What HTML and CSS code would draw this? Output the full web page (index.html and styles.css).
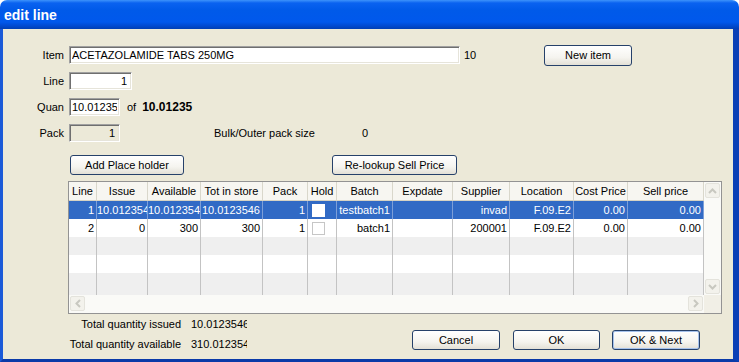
FILE: index.html
```html
<!DOCTYPE html>
<html>
<head>
    <link rel="stylesheet" href="styles.css">
</head>
<body>
    <div class="window">
        <div class="titlebar">edit line</div>
        <div class="client">
            <div class="row">
                <label class="lbl" for="item">Item</label>
                <input type="text" class="field item-field" id="item" value="ACETAZOLAMIDE TABS 250MG">
                <span class="item-count">10</span>
                <button type="button" class="btn btn-new">New item</button>
            </div>
            <div class="row">
                <label class="lbl" for="line">Line</label>
                <input type="text" class="field line-field" id="line" value="1">
            </div>
            <div class="row">
                <label class="lbl" for="quan">Quan</label>
                <input type="text" class="field small-field" id="quan" value="10.0123546">
                <span class="of">of</span>
                <span class="qty">10.01235</span>
            </div>
            <div class="row">
                <label class="lbl" for="pack">Pack</label>
                <input type="text" class="field small-field readonly" id="pack" value="1" readonly>
                <span class="bulk">Bulk/Outer pack size</span>
                <span>0</span>
            </div>

            <div class="btn-row">
                <button type="button" class="btn btn-place">Add Place holder</button>
                <button type="button" class="btn btn-relookup">Re-lookup Sell Price</button>
            </div>

            <div class="grid">
                <div class="grid-body">
                    <div class="grid-row grid-head">
                        <div class="cell">Line</div>
                        <div class="cell">Issue</div>
                        <div class="cell">Available</div>
                        <div class="cell">Tot in store</div>
                        <div class="cell">Pack</div>
                        <div class="cell">Hold</div>
                        <div class="cell">Batch</div>
                        <div class="cell">Expdate</div>
                        <div class="cell">Supplier</div>
                        <div class="cell">Location</div>
                        <div class="cell">Cost Price</div>
                        <div class="cell">Sell price</div>
                    </div>
                    <div class="grid-row selected">
                        <div class="cell">1</div>
                        <div class="cell">10.0123546</div>
                        <div class="cell">10.0123546</div>
                        <div class="cell">10.0123546</div>
                        <div class="cell">1</div>
                        <div class="cell hold"><span class="check"></span></div>
                        <div class="cell">testbatch1</div>
                        <div class="cell"></div>
                        <div class="cell">invad</div>
                        <div class="cell">F.09.E2</div>
                        <div class="cell">0.00</div>
                        <div class="cell">0.00</div>
                    </div>
                    <div class="grid-row">
                        <div class="cell">2</div>
                        <div class="cell">0</div>
                        <div class="cell">300</div>
                        <div class="cell">300</div>
                        <div class="cell">1</div>
                        <div class="cell hold"><span class="check"></span></div>
                        <div class="cell">batch1</div>
                        <div class="cell"></div>
                        <div class="cell">200001</div>
                        <div class="cell">F.09.E2</div>
                        <div class="cell">0.00</div>
                        <div class="cell">0.00</div>
                    </div>
                    <div class="grid-row alt">
                        <div class="cell"></div><div class="cell"></div><div class="cell"></div><div class="cell"></div>
                        <div class="cell"></div><div class="cell"></div><div class="cell"></div><div class="cell"></div>
                        <div class="cell"></div><div class="cell"></div><div class="cell"></div><div class="cell"></div>
                    </div>
                    <div class="grid-row">
                        <div class="cell"></div><div class="cell"></div><div class="cell"></div><div class="cell"></div>
                        <div class="cell"></div><div class="cell"></div><div class="cell"></div><div class="cell"></div>
                        <div class="cell"></div><div class="cell"></div><div class="cell"></div><div class="cell"></div>
                    </div>
                    <div class="grid-row alt tall">
                        <div class="cell"></div><div class="cell"></div><div class="cell"></div><div class="cell"></div>
                        <div class="cell"></div><div class="cell"></div><div class="cell"></div><div class="cell"></div>
                        <div class="cell"></div><div class="cell"></div><div class="cell"></div><div class="cell"></div>
                    </div>
                </div>
                <div class="vscroll">
                    <div class="sb-btn">
                        <svg width="9" height="6" viewBox="0 0 9 6"><polyline points="1,5 4.5,1.5 8,5" fill="none" stroke="#c8c8c0" stroke-width="2"/></svg>
                    </div>
                    <div class="sb-track"></div>
                    <div class="sb-btn">
                        <svg width="9" height="6" viewBox="0 0 9 6"><polyline points="1,1 4.5,4.5 8,1" fill="none" stroke="#c8c8c0" stroke-width="2"/></svg>
                    </div>
                </div>
                <div class="hscroll">
                    <div class="sb-btn">
                        <svg width="6" height="9" viewBox="0 0 6 9"><polyline points="5,1 1.5,4.5 5,8" fill="none" stroke="#c8c8c0" stroke-width="2"/></svg>
                    </div>
                    <div class="sb-track"></div>
                    <div class="sb-btn">
                        <svg width="6" height="9" viewBox="0 0 6 9"><polyline points="1,1 4.5,4.5 1,8" fill="none" stroke="#c8c8c0" stroke-width="2"/></svg>
                    </div>
                </div>
                <div class="corner"></div>
            </div>

            <div class="footer">
                <div class="totals">
                    <div class="total-line">
                        <span class="total-label">Total quantity issued</span>
                        <span class="total-value">10.0123546</span>
                    </div>
                    <div class="total-line">
                        <span class="total-label">Total quantity available</span>
                        <span class="total-value">310.012354</span>
                    </div>
                </div>
                <div class="actions">
                    <button type="button" class="btn btn-cancel">Cancel</button>
                    <button type="button" class="btn btn-ok">OK</button>
                    <button type="button" class="btn btn-next">OK &amp; Next</button>
                </div>
            </div>
        </div>
    </div>
</body>
</html>
```

FILE: styles.css
```css
body {
    margin: 0;
    padding: 0;
    font-family: 'Liberation Sans', Arial, sans-serif;
    font-size: 11px;
    color: #000;
    background-color: #ffffff;
}
.window {
    width: 739px;
    height: 362px;
    display: flex;
    flex-direction: column;
    overflow: hidden;
    border-radius: 7px 7px 0 0;
}
.titlebar {
    height: 29px;
    line-height: 31px;
    padding-left: 4px;
    color: #ffffff;
    font-weight: bold;
    font-size: 14px;
    background: linear-gradient(#3d93fb 0px, #0a62f0 3px, #005ae9 10px, #0058ec 22px, #0049cf 26px, #003fb4 29px);
}
.client {
    flex: 1;
    background-color: #ece9d8;
    border-left: 3px solid #1b5ad8;
    border-right: 6px solid #0a3fb6;
    border-bottom: 3px solid #0a3aa8;
    padding-top: 17px;
}
.row {
    display: flex;
    align-items: center;
    height: 18px;
    margin-bottom: 8px;
}
.lbl {
    width: 61px;
    margin-right: 5px;
    text-align: right;
}
.field {
    height: 18px;
    box-sizing: border-box;
    border: 1px solid;
    border-color: #a0a0a0 #ffffff #ffffff #a0a0a0;
    box-shadow: inset 1px 1px 0 #6f6f6f, inset -1px -1px 0 #e6e4da;
    background-color: #ffffff;
    font-family: inherit;
    font-size: 11px;
    color: #000;
    padding: 0 2px;
    margin: 0;
    outline: none;
}
.item-field {
    width: 391px;
}
.item-count {
    width: 84px;
    padding-left: 4px;
    box-sizing: border-box;
}
.line-field {
    width: 63px;
    text-align: right;
    padding-right: 4px;
}
.small-field {
    width: 51px;
}
.readonly {
    background-color: #ece9d8;
    text-align: right;
    padding-right: 4px;
}
.of {
    margin-left: 7px;
}
.qty {
    margin-left: 6px;
    font-weight: bold;
    font-size: 12px;
}
.bulk {
    margin-left: 94px;
    width: 148px;
}
.btn {
    height: 20px;
    box-sizing: border-box;
    border: 1px solid #26416a;
    border-radius: 3px;
    background: linear-gradient(#ffffff, #f5f4ef 60%, #e3e0d6);
    font-family: inherit;
    font-size: 11px;
    color: #000;
    padding: 0;
    margin: 0;
}
.btn-new {
    width: 88px;
    height: 21px;
}
.btn-row {
    display: flex;
    margin-top: 13px;
    padding-left: 67px;
}
.btn-place {
    width: 114px;
}
.btn-relookup {
    width: 125px;
    margin-left: 148px;
}

/* grid */
.grid {
    display: grid;
    grid-template-columns: 635px 17px;
    grid-template-rows: 113px 18px;
    width: 654px;
    box-sizing: border-box;
    border: 1px solid #939393;
    margin-top: 6px;
    margin-left: 65px;
    background-color: #ffffff;
}
.grid-body {
    overflow: hidden;
    background-color: #efefef;
}
.grid-row {
    display: grid;
    grid-template-columns: 28px 51px 53px 62px 45px 29px 56px 60px 57px 64px 54px 76px;
    height: 18px;
    background-color: #ffffff;
}
.grid-row.alt {
    background-color: #efefef;
}
.grid-row.tall {
    height: 24px;
}
.cell {
    border-right: 1px solid #c3c3c3;
    text-align: right;
    padding-right: 2px;
    overflow: hidden;
    white-space: nowrap;
    line-height: 18px;
}
.grid-head {
    background-color: #f7f6f1;
    border-bottom: 1px solid #d6d3c4;
}
.grid-head .cell {
    text-align: center;
    padding-right: 0;
    border-right: 1px solid #d9d7cb;
}
.selected {
    background-color: #316ac5;
    color: #ffffff;
}
.selected .cell {
    border-right-color: #7d9fd8;
}
.cell.hold {
    text-align: left;
}
.check {
    display: inline-block;
    width: 11px;
    height: 11px;
    border: 1px solid #c6c6c6;
    background-color: #ffffff;
    margin: 3px 0 0 4px;
    vertical-align: top;
}
.selected .check {
    border-color: #ffffff;
}
.vscroll {
    display: flex;
    flex-direction: column;
    background-color: #fafaf7;
}
.hscroll {
    display: flex;
    background-color: #fafaf7;
}
.sb-btn {
    width: 15px;
    height: 15px;
    margin: 1px;
    border: 1px solid #e4e3dc;
    border-radius: 2px;
    background-color: #f3f2ec;
    box-sizing: border-box;
    display: flex;
    align-items: center;
    justify-content: center;
}
.sb-track {
    flex: 1;
}
.corner {
    background-color: #f1efe6;
}

/* footer */
.footer {
    display: flex;
}
.total-line {
    display: flex;
    height: 20px;
    line-height: 20px;
}
.total-label {
    width: 178px;
    text-align: right;
}
.total-value {
    width: 56px;
    margin-left: 10px;
    overflow: hidden;
    white-space: nowrap;
}
.actions {
    display: flex;
    margin-left: auto;
    margin-right: 33px;
    margin-top: 16px;
}
.btn-cancel {
    width: 88px;
}
.btn-ok {
    width: 87px;
    margin-left: 13px;
}
.btn-next {
    width: 88px;
    margin-left: 12px;
    box-shadow: inset 0 0 0 1px #a6c2ec;
}
```
